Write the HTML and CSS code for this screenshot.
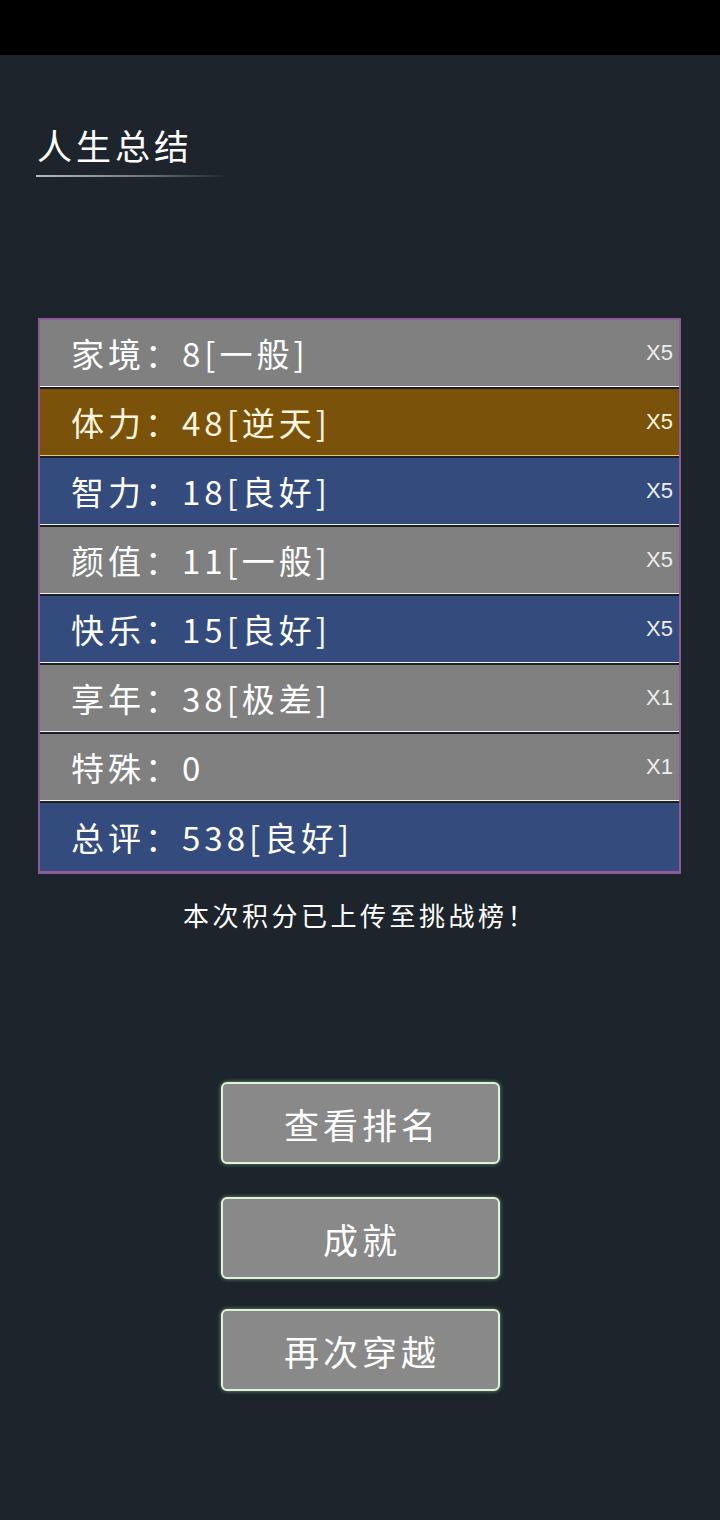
FILE: index.html
```html
<!DOCTYPE html>
<html>
<head>
  <title>人生总结</title>
  <link rel="stylesheet" href="styles.css">
</head>
<body>

<div class="statusbar"></div>

<div class="page">
  <div class="title">
    <h1>人生总结</h1>
    <div class="title-line"></div>
  </div>

  <div class="board">
    <div class="row gray"><span class="label">家境：8[一般]</span><span class="rate">X5</span></div>
    <div class="row brown"><span class="label">体力：48[逆天]</span><span class="rate">X5</span></div>
    <div class="row blue"><span class="label">智力：18[良好]</span><span class="rate">X5</span></div>
    <div class="row gray"><span class="label">颜值：11[一般]</span><span class="rate">X5</span></div>
    <div class="row blue"><span class="label">快乐：15[良好]</span><span class="rate">X5</span></div>
    <div class="row gray"><span class="label">享年：38[极差]</span><span class="rate">X1</span></div>
    <div class="row gray"><span class="label">特殊：0</span><span class="rate">X1</span></div>
    <div class="row blue last"><span class="label">总评：538[良好]</span></div>
  </div>

  <p class="notice">本次积分已上传至挑战榜！</p>

  <div class="actions">
    <button type="button" class="btn">查看排名</button>
    <button type="button" class="btn">成就</button>
    <button type="button" class="btn">再次穿越</button>
  </div>
</div>

</body>
</html>
```

FILE: styles.css
```css
* {
  box-sizing: border-box;
  font-family: "Noto Sans CJK SC", "Noto Sans", sans-serif;
}

body {
  margin: 0;
  padding: 0;
  background: #1d242c;
  color: #fff;
  min-height: 1520px;
}

.statusbar {
  height: 55px;
  background: #000;
}

.page {
  display: flex;
  flex-direction: column;
}

.title {
  padding: 65px 0 0 36px;
}

.title h1 {
  margin: 0 0 0 1px;
  font-size: 35px;
  font-weight: normal;
  line-height: 50px;
  letter-spacing: 4px;
}

.title-line {
  width: 192px;
  height: 2px;
  margin-top: 5px;
  background: linear-gradient(to right, #b8bcc2, #6b7178 60%, rgba(60, 66, 74, 0));
}

.board {
  margin: 141px 39px 0 38px;
  border: 2px solid #8c5b97;
  border-bottom-width: 3px;
  background: #1b2027;
  display: flex;
  flex-direction: column;
  gap: 2px;
}

.row {
  height: 67px;
  display: flex;
  align-items: center;
  justify-content: space-between;
  padding: 0 6px 0 31px;
  border-bottom: 1px solid #f2f2f2;
}

.row.last {
  border-bottom: none;
  height: 68px;
}

.gray {
  background: #808080;
}

.brown {
  background: #7a5209;
  border-bottom-color: #e8c878;
}

.blue {
  background: #334c7d;
}

.label {
  font-size: 33px;
  color: #fff;
  letter-spacing: 4px;
}

.brown .label,
.brown .rate {
  color: #fff6e0;
}

.rate {
  font-family: "Liberation Sans", Arial, sans-serif;
  font-size: 22px;
  color: #eee;
}

.notice {
  margin: 23px 0 0;
  text-align: center;
  font-size: 26px;
  line-height: 36px;
  letter-spacing: 3.5px;
}

.actions {
  margin-top: 149px;
  display: flex;
  flex-direction: column;
  align-items: center;
}

.btn {
  width: 279px;
  height: 82px;
  margin-bottom: 30px;
  border: 2px solid #dff3dc;
  border-radius: 6px;
  background: #898989;
  color: #fff;
  font-size: 35px;
  letter-spacing: 4px;
  text-indent: 4px;
  box-shadow: 0 0 4px rgba(160, 230, 160, 0.6);
  cursor: pointer;
}

.btn:first-child {
  margin-bottom: 33px;
}
```
